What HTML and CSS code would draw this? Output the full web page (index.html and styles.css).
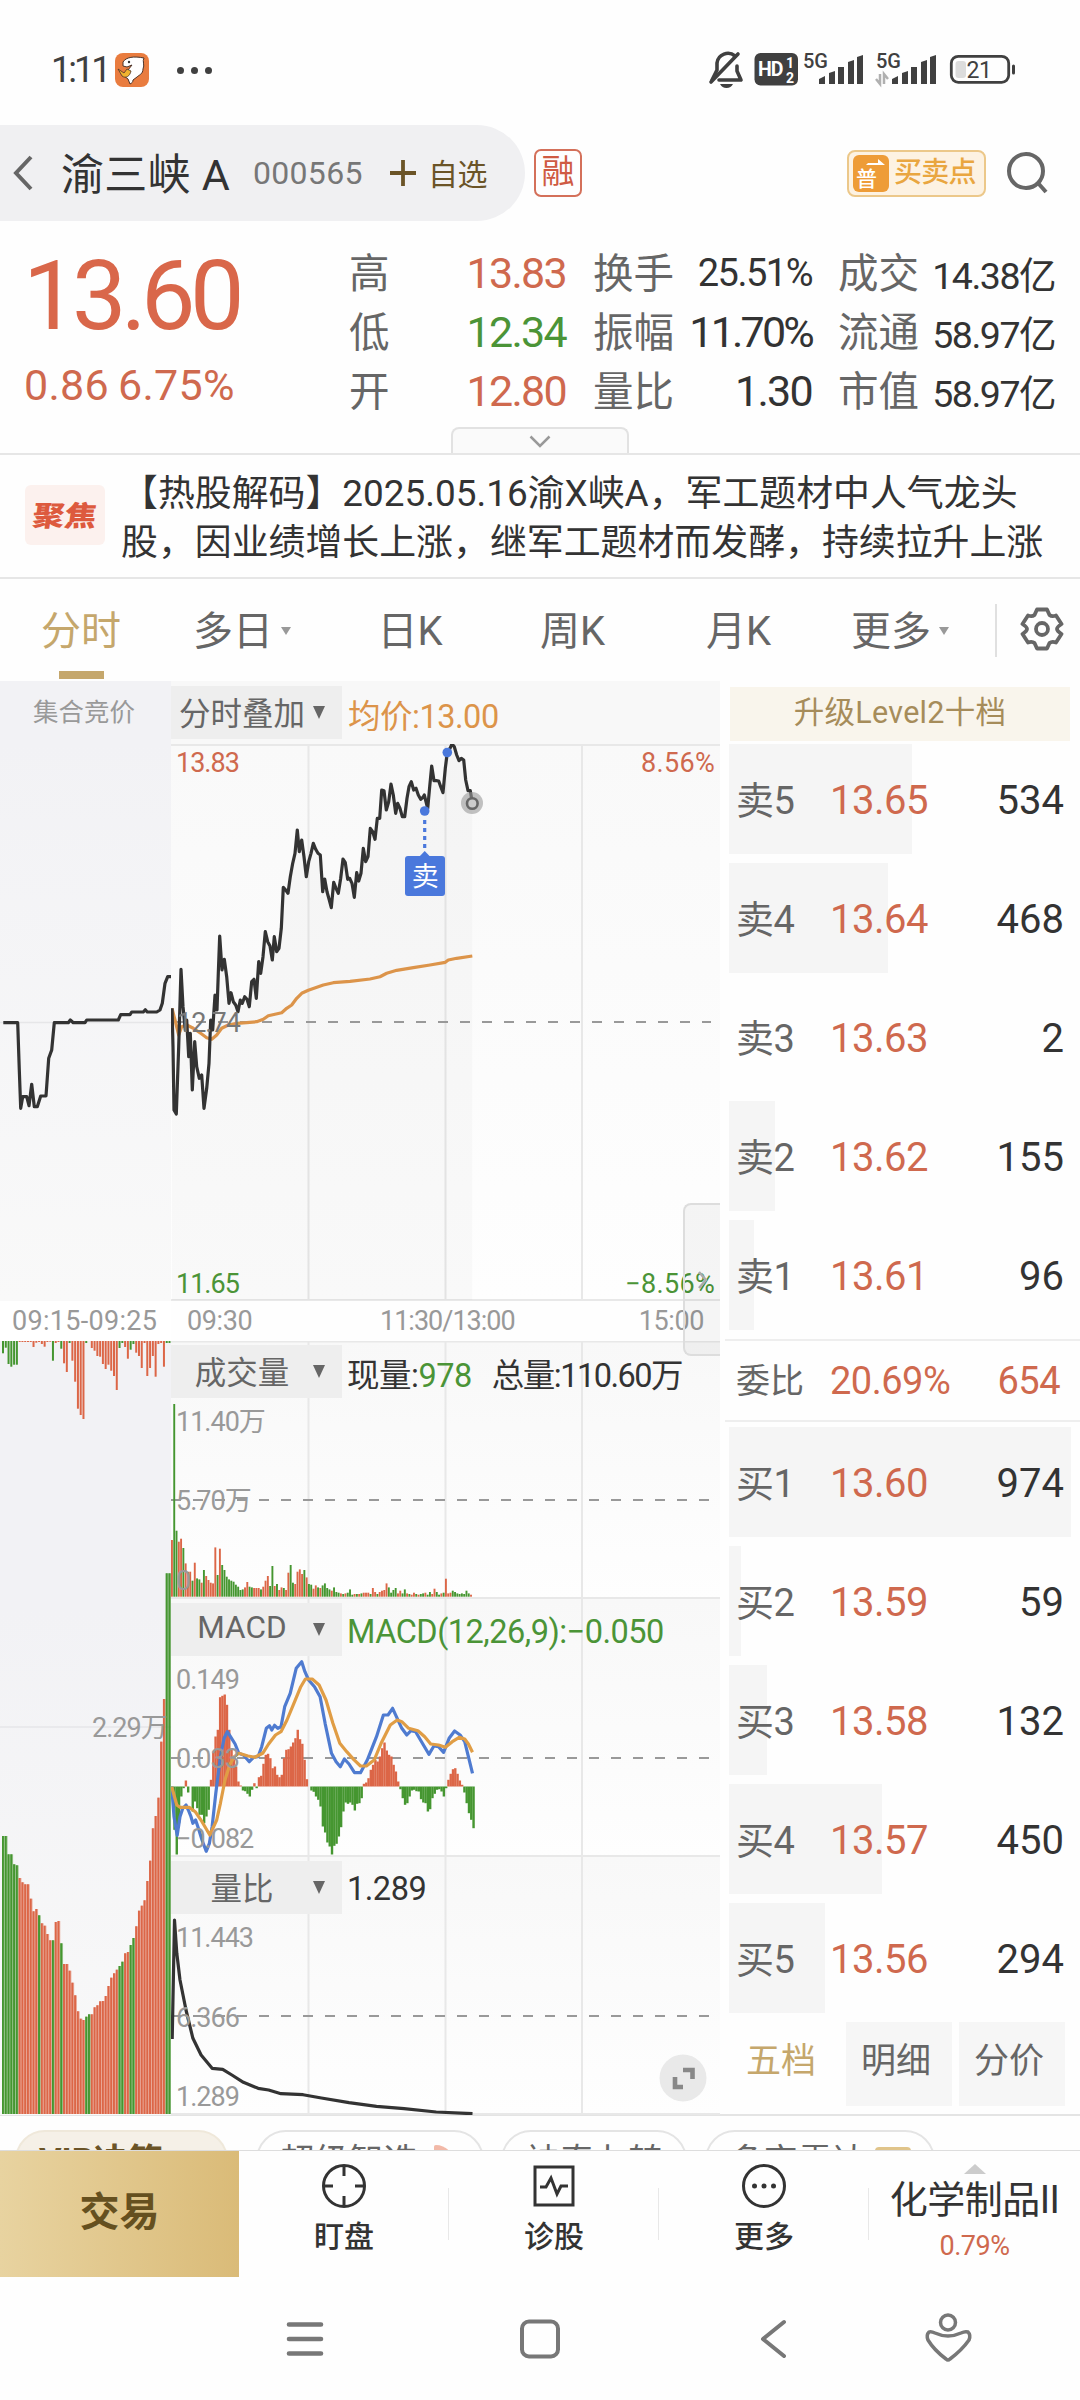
FILE: index.html
```
<!DOCTYPE html>
<html lang="zh-CN">
<head>
    <meta charset="UTF-8">
    <meta name="viewport" content="width=device-width, initial-scale=1.0">
    <title>渝三峡A 000565</title>
    <link rel="stylesheet" href="styles.css">
</head>
<body>
    <div class="status-bar">
        <span class="clock">1:11</span>
        <svg class="app-icon" width="34" height="34" viewBox="0 0 34 34">
            <rect width="34" height="34" rx="8" fill="#e97c3f"/>
            <path d="M8 9C11 4 19 3 29 5C27 8 30 12 28 16C28 21 24 22 22 24L18 27C18 29 17 30 15 31L13 26L9 23L13 17L17 12L12 14L8 13Z" fill="#fff" stroke="#4b3328" stroke-width="1"/>
            <path d="M3 16L9 20L12 16L16 18C15 23 11 26 7 23Z" fill="#f0b32f" stroke="#4b3328" stroke-width=".8"/>
            <circle cx="14" cy="9" r="1.200" fill="#333"/>
        </svg>
        <span class="dots"><i></i><i></i><i></i></span>
        <svg class="status-icons" width="310" height="40" viewBox="708 50 310 40">
            <g fill="none" stroke="#404040" stroke-width="3.600" stroke-linecap="round">
                <path d="M735 56A11 11 0 0 0 717 63V70L712 80"/>
                <path d="M737 66V71L741 80H719" stroke-linejoin="round"/>
                <path d="M711 82L738 54"/>
            </g>
            <path d="M720 84H733Q731 88 726.500 88Q722 88 720 84Z" fill="#404040"/>
            <rect x="754.500" y="53" width="43.500" height="32.500" rx="6" fill="#404040"/>
            <g class="hd-text">
                <text x="758" y="76" font-size="19.500">HD</text>
                <text x="786" y="67.500" font-size="14">1</text>
                <text x="786" y="82.500" font-size="14">2</text>
            </g>
            <g class="net-text">
                <text x="803" y="68" font-size="20">5G</text>
                <text x="876" y="68" font-size="20">5G</text>
            </g>
            <g fill="#404040">
                <path d="M819 84V79L825 76V84ZM829 84V73L835 71V84ZM838 84V67H844V84ZM848 84V62L854 60V84ZM857 84V57L863 55V84Z"/>
                <path d="M892 84V79L898 76V84ZM902 84V73L908 71V84ZM911 84V67H917V84ZM921 84V62L927 60V84ZM930 84V57L936 55V84Z"/>
                <rect x="1012" y="64.500" width="3" height="10" rx="1.500"/>
            </g>
            <path d="M880 74V84L876 79M884 84V74L888 79" fill="none" stroke="#b0b0b0" stroke-width="2.500"/>
            <rect x="951.300" y="56.300" width="57.400" height="26" rx="7" fill="none" stroke="#404040" stroke-width="2.800"/>
            <rect x="955.500" y="61" width="10.500" height="17" rx="3" fill="#dcdcdc"/>
            <text class="battery-text" x="979" y="78" text-anchor="middle">21</text>
        </svg>
    </div>

    <div class="header">
        <div class="stock-pill">
            <svg width="20" height="36" viewBox="0 0 20 36"><path d="M18 2L3 18L18 34" fill="none" stroke="#666" stroke-width="4"/></svg>
            <span class="stock-name">渝三峡 A</span>
            <span class="stock-code">000565</span>
            <svg width="26" height="26" viewBox="0 0 26 26"><path d="M13 0V26M0 13H26" stroke="#6b5427" stroke-width="3.800"/></svg>
            <span class="watch">自选</span>
        </div>
        <span class="margin-tag">融</span>
        <div class="trade-tag">
            <span class="trade-badge">普
                <svg width="20" height="8" viewBox="0 0 20 8"><path d="M0 6H19L12 0V4H2Z" fill="#fff"/></svg>
            </span>
            <span>买卖点</span>
        </div>
        <svg class="search" width="44" height="44" viewBox="0 0 44 44"><g fill="none" stroke="#666" stroke-width="4"><circle cx="20" cy="20" r="17"/><path d="M32 32L40 41"/></g></svg>
    </div>

    <div class="quote">
        <div class="quote-main">
            <div class="price red">13.60</div>
            <div class="change red">0.86 6.75%</div>
        </div>
        <dl class="col-a">
            <dt>高</dt><dd class="red">13.83</dd>
            <dt>低</dt><dd class="green">12.34</dd>
            <dt>开</dt><dd class="red">12.80</dd>
        </dl>
        <dl class="col-b">
            <dt>换手</dt><dd class="small">25.51%</dd>
            <dt>振幅</dt><dd class="tight">11.70%</dd>
            <dt>量比</dt><dd>1.30</dd>
        </dl>
        <dl class="col-c">
            <dt>成交</dt><dd class="small">14.38亿</dd>
            <dt>流通</dt><dd class="small">58.97亿</dd>
            <dt>市值</dt><dd class="small">58.97亿</dd>
        </dl>
        <div class="expand-tab"><svg width="22" height="13" viewBox="0 0 22 13"><path d="M1.500 1.500L11 11L20.500 1.500" fill="none" stroke="#999" stroke-width="2.500"/></svg></div>
    </div>

    <div class="news">
        <div class="news-tag"><span>聚焦</span></div>
        <p>【热股解码】2025.05.16渝X峡A，军工题材中人气龙头<br>股，因业绩增长上涨，继军工题材而发酵，持续拉升上涨</p>
    </div>

    <div class="tabs">
        <span class="tab active">分时</span>
        <span class="tab">多日<i class="caret"></i></span>
        <span class="tab">日K</span>
        <span class="tab">周K</span>
        <span class="tab">月K</span>
        <span class="tab">更多<i class="caret"></i></span>
        <div class="settings">
            <svg width="44" height="44" viewBox="0 0 44 44" fill="none" stroke="#666" stroke-width="3.800" stroke-linejoin="round">
                <path d="M17 2.500H27L29.500 8Q32 10 36 8.500L41.500 17Q37 20 37 22Q37 24 41.500 27L36 35.500Q32 34 29.500 36L27 41.500H17L14.500 36Q12 34 8 35.500L2.500 27Q7 24 7 22Q7 20 2.500 17L8 8.500Q12 10 14.500 8Z"/>
                <circle cx="22" cy="22" r="6"/>
            </svg>
        </div>
    </div>

    <div class="content">
        <div class="auction">
            <div class="auction-title">集合竞价</div>
            <svg class="auction-price" width="171" height="557" viewBox="0 744 171 557">
                <path d="M0 1022.500H171" stroke="#e6e6e8" stroke-width="1.500"/>
                <polyline id="auctionLine" class="line dark"/>
            </svg>
            <div class="auction-time">09:15-09:25</div>
            <svg class="auction-volume" width="171" height="774" viewBox="0 1341 171 774">
                <path d="M0 1727H171" stroke="#e6e6e8" stroke-width="1.500"/>
                <g id="auctionBars"></g>
                <text class="axis" x="92" y="1737">2.29万</text>
            </svg>
        </div>

        <div class="charts">
            <div class="chart-head">
                <div class="select"><span>分时叠加</span><i></i></div>
                <span class="avg">均价:13.00</span>
            </div>
            <svg class="price-chart" width="549" height="557" viewBox="171 744 549 557">
                <path class="grid" d="M171 745H720M308.500 744V1300M445.500 744V1300M582 744V1300M171 1300H720"/>
                <polygon id="priceArea" fill="#000" fill-opacity=".018"/>
                <path class="dash" d="M174 1022H711"/>
                <polyline id="avgLine" class="line" stroke="#dc944a"/>
                <polyline id="priceLine" class="line dark"/>
                <text class="axis up" x="176" y="772">13.83</text>
                <text class="axis up wide" x="715" y="772" text-anchor="end">8.56%</text>
                <text class="axis mid" x="177" y="1032">12.74</text>
                <text class="axis down" x="176" y="1293">11.65</text>
                <text class="axis down wide" x="715" y="1293" text-anchor="end">−8.56%</text>
                <circle cx="472" cy="803" r="11" fill="#999" fill-opacity=".6"/>
                <circle cx="472.300" cy="803.500" r="5.300" fill="#ccc" stroke="#666" stroke-width="2.600"/>
                <path d="M424.700 820V852" stroke="#4a78dc" stroke-width="3.200" stroke-dasharray="4 4"/>
                <path d="M419 857L424.700 851L430.500 857Z" fill="#4a78dc"/>
                <rect x="405" y="856" width="40" height="40" rx="3" fill="#4a78dc"/>
                <text class="sell" x="425" y="886" text-anchor="middle">卖</text>
                <circle cx="424.700" cy="811" r="4.800" fill="#4a78dc"/>
                <circle cx="447.300" cy="752.500" r="4.800" fill="#4a78dc"/>
            </svg>
            <div class="time-axis"><span>09:30</span><span>11:30/13:00</span><span>15:00</span></div>

            <div class="panel volume">
                <div class="panel-head">
                    <div class="select"><span>成交量</span><i></i></div>
                    <span>现量:<b class="green">978</b></span><span class="total">总量:110.60万</span>
                </div>
                <svg width="549" height="258" viewBox="171 1341 549 258">
                    <path class="grid" d="M171 1341.500H720M308.500 1341V1598M445.500 1341V1598M582 1341V1598M171 1598H720"/>
                    <path class="dash" d="M171 1500H711"/>
                    <g id="volumeBars"></g>
                    <text class="axis" x="176" y="1431">11.40万</text>
                    <text class="axis" x="176" y="1510">5.70万</text>
                    <text class="axis" x="176" y="1590">0</text>
                </svg>
            </div>
            <div class="panel macd">
                <div class="panel-head">
                    <div class="select"><span>MACD</span><i></i></div>
                    <span class="green">MACD(12,26,9):−0.050</span>
                </div>
                <svg width="549" height="258" viewBox="171 1599 549 258">
                    <path class="grid" d="M308.500 1599V1856M445.500 1599V1856M582 1599V1856M171 1856H720"/>
                    <path class="dash" d="M171 1758H711"/>
                    <g id="macdBars"></g>
                    <polyline id="difLine" class="line" stroke="#4f7bd0"/>
                    <polyline id="deaLine" class="line" stroke="#e09d45"/>
                    <text class="axis" x="176" y="1689">0.149</text>
                    <text class="axis" x="176" y="1768">0.033</text>
                    <text class="axis" x="176" y="1848">−0.082</text>
                </svg>
            </div>
            <div class="panel ratio">
                <div class="panel-head">
                    <div class="select"><span>量比</span><i></i></div>
                    <span>1.289</span>
                </div>
                <svg width="549" height="258" viewBox="171 1857 549 258">
                    <path class="grid" d="M308.500 1857V2114M445.500 1857V2114M582 1857V2114M171 2114H720"/>
                    <path class="dash" d="M171 2016H711"/>
                    <polyline id="ratioLine" class="line dark"/>
                    <text class="axis" x="176" y="1947">11.443</text>
                    <text class="axis" x="176" y="2027">6.366</text>
                    <text class="axis" x="176" y="2106">1.289</text>
                    <circle cx="683" cy="2078" r="23.500" fill="#e9e9e9"/>
                    <path d="M683 2070H692.500V2079M683 2087H675V2077" fill="none" stroke="#888" stroke-width="4.600"/>
                </svg>
            </div>
            <div class="drawer"><svg width="9" height="18" viewBox="0 0 9 18"><path d="M1 1L8 9L1 17" fill="none" stroke="#aaa" stroke-width="2.500"/></svg></div>
        </div>

        <div class="book">
            <div class="level2">升级Level2十档</div>
            <div class="rows">
                <div class="row"><i style="width:183px"></i><span>卖5</span><span class="red">13.65</span><b>534</b></div>
                <div class="row"><i style="width:159px"></i><span>卖4</span><span class="red">13.64</span><b>468</b></div>
                <div class="row"><i style="width:0"></i><span>卖3</span><span class="red">13.63</span><b>2</b></div>
                <div class="row"><i style="width:46px"></i><span>卖2</span><span class="red">13.62</span><b>155</b></div>
                <div class="row"><i style="width:25px"></i><span>卖1</span><span class="red">13.61</span><b>96</b></div>
            </div>
            <div class="ratio-row"><span>委比</span><span class="red">20.69%</span><b class="red">654</b></div>
            <div class="rows">
                <div class="row"><i style="width:342px"></i><span>买1</span><span class="red">13.60</span><b>974</b></div>
                <div class="row"><i style="width:12px"></i><span>买2</span><span class="red">13.59</span><b>59</b></div>
                <div class="row"><i style="width:38px"></i><span>买3</span><span class="red">13.58</span><b>132</b></div>
                <div class="row"><i style="width:153px"></i><span>买4</span><span class="red">13.57</span><b>450</b></div>
                <div class="row"><i style="width:96px"></i><span>买5</span><span class="red">13.56</span><b>294</b></div>
            </div>
            <div class="book-tabs"><span class="active">五档</span><span>明细</span><span>分价</span></div>
        </div>
    </div>

    <div class="chips">
        <span class="chip vip">VIP决策</span>
        <span class="chip super">超级智选<i class="flame"></i></span>
        <span class="chip nine">神奇九转</span>
        <span class="chip radar">多空雷达<i class="crown"></i></span>
    </div>

    <div class="toolbar">
        <div class="trade">交易</div>
        <div class="tool">
            <svg width="46" height="46" viewBox="0 0 46 46" fill="none" stroke="#333" stroke-width="3"><circle cx="23" cy="23" r="20.500"/><path d="M23 2V13M23 33V44M2 23H12M34 23H44"/></svg>
            <span>盯盘</span>
        </div>
        <div class="tool">
            <svg width="46" height="46" viewBox="0 0 46 46" fill="none" stroke="#333" stroke-width="3"><rect x="4" y="4" width="38" height="38"/><path d="M9 24H15L20 15L26 31L30 23H37"/></svg>
            <span>诊股</span>
        </div>
        <div class="tool">
            <svg width="46" height="46" viewBox="0 0 46 46" fill="none" stroke="#333" stroke-width="3"><circle cx="23" cy="23" r="20.500"/><g fill="#333" stroke="none"><circle cx="13.500" cy="23" r="2.500"/><circle cx="23" cy="23" r="2.500"/><circle cx="32.500" cy="23" r="2.500"/></g></svg>
            <span>更多</span>
        </div>
        <div class="sector"><i></i><span>化学制品II</span><b class="red">0.79%</b></div>
    </div>

    <div class="nav-bar">
        <svg width="1080" height="124" viewBox="0 2276 1080 124" fill="none" stroke="#777" stroke-width="4" stroke-linecap="round" stroke-linejoin="round">
            <path d="M289 2323.500H321M289 2338H321M289 2352.500H321" stroke-width="4.600"/>
            <rect x="522" y="2320.500" width="36" height="35" rx="7"/>
            <path d="M784 2321L763 2338L784 2355"/>
            <circle cx="948" cy="2321.500" r="7.500" stroke-width="3.500"/>
            <path d="M929 2331Q926 2334 928 2339Q934 2349 946 2358Q948 2360 950 2358Q962 2349 969 2339Q971 2334 968 2331Q965 2330 961 2332Q948 2338 935 2332Q931 2330 929 2331Z" stroke-width="3.500"/>
        </svg>
    </div>

    <script src="script.js"></script>
</body>
</html>
```
FILE: styles.css
```
* {
    box-sizing: border-box;
}
body {
    margin: 0;
    width: 1080px;
    height: 2400px;
    overflow: hidden;
    background: #fefefe;
    color: #333;
    font-family: Roboto, "Noto Sans CJK SC", sans-serif;
    letter-spacing: -0.03em;
}
svg {
    display: block;
    flex: none;
}
i {
    font-style: normal;
}
b {
    font-weight: 400;
}
.red {
    color: #cf694e;
}
.green {
    color: #4b9437;
}

/* status bar */
.status-bar {
    display: flex;
    align-items: center;
    height: 125px;
    padding: 15px 62px 0 51px;
}
.clock {
    width: 64px;
    font-size: 36px;
    color: #404040;
    letter-spacing: -3px;
}
.dots {
    display: flex;
    gap: 7px;
    margin-left: 28px;
}
.dots i {
    width: 7px;
    height: 7px;
    border-radius: 50%;
    background: #404040;
}
.status-icons {
    margin-left: auto;
}
.hd-text {
    font-weight: 700;
    fill: #fff;
    letter-spacing: -1px;
}
.net-text {
    font-weight: 500;
    fill: #404040;
    letter-spacing: 0;
}
.battery-text {
    font-size: 23px;
    fill: #404040;
}

/* header */
.header {
    display: flex;
    align-items: center;
    height: 96px;
}
.stock-pill {
    display: flex;
    align-items: center;
    width: 525px;
    height: 96px;
    padding-left: 13px;
    background: #f0f0f2;
    border-radius: 0 48px 48px 0;
}
.stock-name {
    width: 191px;
    margin: -4px 0 0 28px;
    font-size: 43px;
    letter-spacing: .3px;
    white-space: nowrap;
}
.stock-code {
    width: 138px;
    padding-left: 1px;
    font-size: 32px;
    color: #777;
    letter-spacing: .3px;
}
.watch {
    margin: -3px 0 0 12px;
    font-size: 30px;
    color: #6b5427;
    letter-spacing: -.5px;
}
.margin-tag {
    width: 48px;
    height: 48px;
    margin-left: 9px;
    border: 2px solid #d4705a;
    border-radius: 7px;
    color: #cf5b43;
    font-size: 33px;
    line-height: 42px;
    text-align: center;
    letter-spacing: 0;
}
.trade-tag {
    display: flex;
    align-items: center;
    width: 139px;
    height: 47px;
    margin-left: 265px;
    padding-left: 4px;
    border: 2px solid #ecc88a;
    border-radius: 8px;
    background: #fdf2e2;
    color: #e9a640;
    font-size: 28px;
    font-weight: 500;
    letter-spacing: -.8px;
    line-height: 40px;
}
.trade-badge {
    position: relative;
    width: 36px;
    height: 37px;
    margin-right: 5px;
    padding: 13px 0 0 3px;
    border-radius: 6px;
    background: #ee9c37;
    color: #fff;
    font-size: 21px;
    line-height: 22px;
}
.trade-badge svg {
    position: absolute;
    top: 4px;
    left: 13px;
}
.search {
    margin-left: 20px;
}

/* quote */
.quote {
    position: relative;
    display: flex;
    height: 234px;
    border-bottom: 2px solid #e6e6e6;
}
.quote-main {
    width: 349px;
    padding-left: 23px;
}
.price {
    margin-top: 18px;
    font-size: 97px;
    line-height: 114px;
    color: #d9674a;
    letter-spacing: -5.500px;
}
.change {
    padding-left: 1px;
    font-size: 43px;
    line-height: 64px;
    letter-spacing: .3px;
    word-spacing: -2px;
}
.quote dl {
    display: grid;
    grid-template-columns: auto 1fr;
    grid-auto-rows: 59px;
    align-items: center;
    align-content: start;
    margin: 22px 0 0;
}
.quote dt {
    margin-top: -4px;
    color: #666;
    font-size: 40.500px;
    letter-spacing: 0;
}
.quote dd {
    margin: 0;
    font-size: 43px;
    text-align: right;
    white-space: nowrap;
    letter-spacing: -1.700px;
}
.quote dd.small {
    font-size: 38px;
    letter-spacing: -1.500px;
}
.quote dd.tight {
    letter-spacing: -2.800px;
}
.quote .col-c dd {
    margin-top: -1px;
    font-size: 37.500px;
}
.quote .col-a {
    width: 217px;
    margin-right: 27px;
}
.quote .col-b {
    width: 219px;
    margin-right: 26px;
}
.quote .col-c {
    width: 217px;
}
.expand-tab {
    position: absolute;
    left: 451px;
    bottom: 0;
    display: flex;
    justify-content: center;
    width: 178px;
    height: 26px;
    padding-top: 6px;
    border: 2px solid #e2e2e2;
    border-bottom: 0;
    border-radius: 8px 8px 0 0;
    background: #fafafa;
}

/* news */
.news {
    display: flex;
    align-items: center;
    height: 124px;
    padding-left: 25px;
    border-bottom: 2px solid #e6e6e6;
}
.news-tag {
    display: flex;
    align-items: center;
    justify-content: center;
    width: 80px;
    height: 60px;
    margin-top: -2px;
    border-radius: 6px;
    background: #fcf1ee;
}
.news-tag span {
    margin-top: -3px;
    color: #dd5a3e;
    font-size: 32px;
    font-weight: 900;
    letter-spacing: 0;
    transform: skewX(-8deg) scaleY(.88);
}
.news p {
    margin: 3px 0 0 16px;
    font-size: 36.900px;
    line-height: 49px;
    letter-spacing: 0;
    white-space: nowrap;
}

/* tabs */
.tabs {
    display: grid;
    grid-template-columns: 164px 155px 185px 140px 192px 159px 85px;
    align-items: center;
    height: 102px;
    color: #666;
    font-size: 40px;
    letter-spacing: 0;
}
.tab {
    position: relative;
    display: flex;
    align-items: center;
    justify-content: center;
    height: 100px;
    padding: 0 3px 4px 0;
}
.tab.active {
    justify-content: flex-start;
    padding-left: 41px;
    color: #c5a76c;
}
.tab.active::after {
    content: "";
    position: absolute;
    left: 59px;
    bottom: 1px;
    width: 45px;
    height: 8px;
    background: #c5a76c;
}
.tab:nth-child(2) {
    justify-content: flex-start;
    padding-left: 29px;
}
.tab:nth-child(6) {
    justify-content: flex-start;
    padding-left: 15px;
}
.caret {
    margin: 6px 0 0 8px;
    border: 5px solid transparent;
    border-top: 8px solid #999;
    border-bottom: 0;
}
.settings {
    display: flex;
    align-items: center;
    height: 53px;
    padding: 0 0 3px 23px;
    border-left: 2px solid #e0e0e0;
}

/* charts */
.content {
    display: flex;
    height: 1435px;
    border-bottom: 2px solid #e4e4e4;
}
.auction {
    width: 171px;
    background: #f2f2f5;
}
.auction-title {
    height: 63px;
    padding: 12px 0 0 33px;
    font-size: 25.500px;
    line-height: 38px;
    color: #999;
    letter-spacing: 0;
}
.auction-price {
    background: linear-gradient(#f2f2f5, #f9f9f9);
}
.auction-time {
    height: 40px;
    padding-left: 12px;
    background: #fff;
    color: #999;
    font-size: 27px;
    line-height: 41px;
    letter-spacing: .3px;
}
.auction-volume {
    background: linear-gradient(#f2f2f5 35%, #f9f9f9);
}
.charts {
    position: relative;
    width: 549px;
}
.chart-head {
    display: flex;
    align-items: center;
    height: 63px;
    background: #f8f8f8;
}
.select {
    display: flex;
    align-items: center;
    width: 171px;
    height: 53px;
    background: #eee;
    color: #666;
    font-size: 31.500px;
}
.select span {
    width: 142px;
    margin-top: -4px;
    text-align: center;
    letter-spacing: 0;
}
.select i {
    border: 6.500px solid transparent;
    border-top: 13px solid #666;
    border-bottom: 0;
}
.avg {
    margin: 1px 0 0 6px;
    color: #dc944a;
    font-size: 32.500px;
}
.price-chart {
    background: linear-gradient(#f9f9f9, #fefefe);
}
.grid {
    stroke: #e8e8e8;
    stroke-width: 2;
    fill: none;
}
.dash {
    stroke: #999;
    stroke-width: 2;
    stroke-dasharray: 10 12;
}
.line {
    fill: none;
    stroke-width: 3.200;
    stroke-linejoin: round;
}
.line.dark {
    stroke: #333;
}
.axis {
    font-size: 27px;
    fill: #999;
    letter-spacing: -1px;
}
.axis.up {
    fill: #cf694e;
}
.axis.down {
    fill: #4b9437;
}
.axis.mid {
    fill: #777;
}
.axis.wide {
    letter-spacing: .3px;
}
.sell {
    font-size: 27px;
    fill: #fff;
}
.time-axis {
    display: grid;
    grid-template-columns: 170px 210px 1fr;
    height: 40px;
    padding: 0 16px;
    color: #999;
    font-size: 27px;
    line-height: 41px;
    letter-spacing: -.4px;
}
.time-axis span:nth-child(2) {
    padding-left: 23px;
    letter-spacing: -1px;
}
.time-axis span:last-child {
    text-align: right;
}
.panel {
    position: relative;
    height: 258px;
    background: linear-gradient(#f8f8f8, #fefefe);
}
.panel-head {
    position: absolute;
    top: 4px;
    left: 0;
    display: flex;
    align-items: center;
    font-size: 32.500px;
}
.panel-head > span {
    margin: 2px 0 0 5px;
    white-space: nowrap;
}
.panel-head > .total {
    margin-left: 20px;
    letter-spacing: -1.500px;
}
.macd .panel-head > span {
    margin-top: 4px;
    letter-spacing: -.5px;
}
.drawer {
    position: absolute;
    top: 522px;
    right: 0;
    display: flex;
    align-items: center;
    justify-content: center;
    width: 37px;
    height: 153px;
    border: 2px solid #ddd;
    border-right: 0;
    border-radius: 8px 0 0 8px;
    background: rgba(0, 0, 0, .035);
}

/* order book */
.book {
    width: 360px;
    padding: 6px 0 0 9px;
}
.level2 {
    width: 340px;
    height: 54px;
    margin-left: 1px;
    background: #f9f5ec;
    color: #a68c5a;
    font-size: 30.500px;
    line-height: 51px;
    text-align: center;
    letter-spacing: .3px;
}
.rows {
    display: flex;
    flex-direction: column;
    gap: 9px;
    padding-top: 3px;
}
.row {
    position: relative;
    display: grid;
    grid-template-columns: 94px 1fr auto;
    align-items: center;
    height: 110px;
    padding: 2px 16px 0 7px;
    color: #333;
    font-size: 40px;
}
.row > * {
    position: relative;
}
.row > i {
    position: absolute;
    top: 0;
    left: 0;
    height: 110px;
    background: #f5f5f5;
}
.row b {
    letter-spacing: 0;
}
.row span:nth-child(2) {
    margin-top: -5px;
    color: #666;
    font-size: 38px;
}
.ratio-row {
    display: grid;
    grid-template-columns: 94px 1fr auto;
    align-items: center;
    height: 83px;
    margin: 9px 0 2px -4px;
    padding: 0 20px 0 11px;
    border: 2px solid #eee;
    border-width: 2px 0;
    font-size: 38px;
    letter-spacing: -.5px;
}
.ratio-row span:first-child {
    margin-top: -4px;
    color: #666;
    font-size: 34px;
    letter-spacing: 0;
}
.book-tabs {
    display: grid;
    grid-template-columns: 110px 106px 106px;
    gap: 7px;
    margin-top: 9px;
    font-size: 35px;
    line-height: 80px;
    color: #666;
    letter-spacing: 0;
    text-align: center;
}
.book-tabs span {
    height: 84px;
    padding-right: 6px;
    background: #f6f6f6;
}
.book-tabs .active {
    background: none;
    color: #c5a76c;
}

/* feature chips, cut by the toolbar */
.chips {
    display: flex;
    height: 34px;
    padding: 14px 0 0 15px;
    overflow: hidden;
}
.chip {
    flex: none;
    height: 60px;
    border: 2px solid #e4e4e4;
    border-radius: 30px;
    color: #666;
    font-size: 34.500px;
    line-height: 58px;
    letter-spacing: 0;
    padding-left: 22px;
}
.chip.vip {
    width: 213px;
    margin-right: 28px;
    border-color: #efe8da;
    background: #f5f0e7;
    color: #6b5427;
    font-weight: 700;
}
.chip.super {
    width: 228px;
    margin-right: 17px;
}
.chip.nine {
    width: 186px;
    margin-right: 18px;
}
.chip.radar {
    width: 230px;
}
.flame, .crown {
    display: inline-block;
    width: 20px;
    height: 30px;
    margin-left: 16px;
    border-radius: 2px 20px 8px 8px;
    background: #f2b9a8;
    vertical-align: -2px;
}
.crown {
    width: 36px;
    height: 24px;
    margin-left: 8px;
    border-radius: 4px;
    background: #e0c48a;
    vertical-align: 2px;
}

/* toolbar */
.toolbar {
    display: flex;
    height: 127px;
    border-top: 1px solid #ddd;
}
.trade {
    width: 239px;
    background: linear-gradient(90deg, #e8d3a0, #dabb78);
    color: #65501f;
    font-size: 40px;
    font-weight: 700;
    line-height: 124px;
    text-align: center;
    letter-spacing: 0;
}
.tool {
    display: flex;
    flex-direction: column;
    align-items: center;
    gap: 6px;
    width: 210px;
    padding-top: 12px;
    font-size: 30px;
    font-weight: 500;
    line-height: 44px;
    letter-spacing: 0;
    background: linear-gradient(#e8e8e8, #e8e8e8) right 37px / 1px 52px no-repeat;
}
.sector {
    display: flex;
    flex-direction: column;
    align-items: center;
    flex: 1;
    padding-top: 13px;
    font-size: 38px;
    line-height: 50px;
    letter-spacing: -.5px;
}
.sector i {
    border: 11px solid transparent;
    border-top: 0;
    border-bottom: 10px solid #ccc;
}
.sector span {
    margin-top: 1px;
}
.sector b {
    font-size: 27px;
    line-height: 42px;
    letter-spacing: -.5px;
}
.nav-bar {
    height: 124px;
}
```
FILE: script.js
```
const RED = '#dc6647';
const GREEN = '#459630';
const NS = 'http://www.w3.org/2000/svg';

// [x, y] pairs -> page pixels
function scale(raw, kx, ky, y0) {
    return raw.trim().split(/\s+/).map(p => {
        const [x, y] = p.split(',').map(Number);
        return (x * kx).toFixed(1) + ',' + (y0 + y * ky).toFixed(1);
    }).join(' ');
}

function draw(id, points) {
    document.getElementById(id).setAttribute('points', points);
}

function bar(group, x, y, w, h, color, opacity) {
    const r = document.createElementNS(NS, 'rect');
    r.setAttribute('x', x.toFixed(2));
    r.setAttribute('y', y.toFixed(1));
    r.setAttribute('width', w);
    r.setAttribute('height', Math.max(h, 0.5).toFixed(1));
    r.setAttribute('fill', color);
    if (opacity) r.setAttribute('fill-opacity', opacity);
    group.appendChild(r);
}

const KX = 720 / 1568;
const KY = 1 / 3;

// price lines
draw('auctionLine', scale(`10,1028 53,1028 58,1170 62,1285 68,1250 80,1250 87,1277 95,1213 103,1280 112,1280 122,1248 138,1248
    146,1135 155,1110 163,1028 205,1028 211,1020 220,1028 255,1028 260,1020 355,1020 362,1004 390,1004 395,996 430,996
    436,989 442,996 470,996 480,990 487,970 495,910 503,890 518,890`, KY, KY, 680));

const price = scale(`516,985 519,1100 522,1290 529,1302 536,1100 543,868 549,980 556,1050 560,1020 566,1130 571,1060 577,1230
    584,1085 590,1160 598,1195 605,1185 612,1285 620,1225 627,1150 632,1020 638,1050 645,945 651,990 655,880 659,768
    666,870 673,838 680,890 687,970 693,938 700,965 707,975 714,995 721,960 727,970 734,950 741,958 748,980 755,905
    762,898 769,955 776,845 782,880 789,830 796,755 803,785 810,798 817,840 823,770 830,815 837,805 844,745 850,622
    857,630 864,640 871,590 878,550 885,520 892,450 898,515 905,480 912,530 919,590 926,545 933,520 940,490 947,508
    954,520 961,525 968,635 974,597 981,635 988,660 994,683 1001,607 1008,625 1015,640 1022,595 1029,537 1036,548
    1043,598 1049,595 1056,610 1063,652 1070,578 1076,603 1083,580 1090,505 1097,545 1104,530 1111,445 1118,455
    1125,478 1132,415 1139,415 1145,330 1152,332 1159,390 1166,365 1173,312 1180,345 1187,400 1193,370 1200,385
    1207,410 1214,410 1221,355 1227,320 1234,305 1241,330 1248,325 1255,345 1262,358 1269,352 1273,345 1283,385
    1289,320 1295,258 1302,302 1309,302 1316,303 1322,320 1329,338 1336,265 1342,218 1350,205 1356,192 1363,200
    1370,225 1377,242 1384,235 1391,240 1397,300 1404,332 1411,332 1417,368`, KY, KY, 680);
draw('priceLine', price);
draw('priceArea', price + ' 472.3,1300 172,1300');

draw('avgLine', scale(`516,985 525,1020 536,1065 545,1040 560,1035 580,1045 605,1062 620,1073 635,1078 650,1065 665,1045
    685,1035 710,1030 740,1028 770,1025 790,1018 805,1007 845,998 860,985 875,975 890,955 905,940 925,931 970,915
    1000,908 1050,904 1110,897 1140,890 1160,880 1190,871 1240,863 1290,855 1336,847 1345,840 1370,835 1417,828`, KY, KY, 680));

// call auction: unmatched volume from the top, matched volume from the bottom
const matched = `48g 48g 103g 103g 133g 136g 174 187 193 193 236 274 267 286g 310 317 342 361 361g 306 303 370g 432 432 452
    488 526 574 596 600 590g 583g 583 562 556 544 543 528 498 473 460 449 438g 425g 400 396 375g 354g 319 272 257 241
    183 122 25 -12 -67 -235 -363 -740g -740g`.split(/\s+/);
const unmatched = `37g 20g 69g 77g 71g 71g 3 3 3 3 3 18 5 3 9 17 3 2 59g 6 3 23g 67 93 6g 59 122 203 222 234 6g 0 21 29 45
    47 69 84 71 89 105 147 21g 6g 18 53 26g 9g 35 45 81 6 105 81 45 107 9 6 77 6g 6g`.split(/\s+/);
const auction = document.getElementById('auctionBars');
matched.forEach((v, i) => {
    const color = v.endsWith('g') ? GREEN : RED;
    const y = 1820 + parseInt(v) * KY;
    const x = 2 + i * 2.775;
    bar(auction, x, y, 2.775, 2114 - y, color, .5);
    bar(auction, x, y, 1.9, 2114 - y, color);
});
unmatched.forEach((v, i) => {
    const h = parseInt(v) * KY;
    if (h) bar(auction, 2 + i * 2.775, 1341, 2, h, v.endsWith('g') ? GREEN : RED);
});

// volume
const volume = `170 578g 198g 165 174 146g 100 75 75 48g 102 55g 52g 42 80g 62 50 42 40 148 65g 144 95g 80g 60g 52g 48g 45g
    36g 30g 20g 22g 28 44 30g 28g 26 26 26 22g 30 48 62 32g 92g 32 38g 20 28 26g 20 72 95g 42g 38 75 82 68 80g 58 38g 36g
    24 34 28g 26 34g 40g 26g 22g 18 28g 14g 12g 10 8g 10 12g 22g 6g 8 8g 8 10g 12 12 12 8g 26 14 8g 14 18 20 40 28g 12g
    20g 26g 10 18 10g 22g 10 8g 6 12 8g 6 8g 10g 12 6g 14g 8 24 14g 6g 10 12g 54 10 12 18g 14g 10g 8g 10g 8g 18g 10g 6`.split(/\s+/);
const volumeBars = document.getElementById('volumeBars');
volume.forEach((v, i) => {
    const h = parseInt(v) * KY;
    bar(volumeBars, 171 + i * 2.283, 1596.7 - h, 1.9, h, v.endsWith('g') ? GREEN : RED);
});

// MACD
const macd = [-25, -130, -204, -110, -30, -5, 18, -18, 0, -75, -45, -65, -85, -85, -110, -90, -70, 20, 105, 150, 170, 268,
    272, 276, 245, 170, 115, 85, 60, 15, 3, -12, -14, -22, -30, -10, 10, -5, 28, 32, 68, 95, 98, 85, 55, 60, 35, 28, 35,
    85, 110, 112, 120, 132, 145, 170, 142, 128, 80, 22, 0, -12, -16, -30, -40, -60, -120, -138, -168, -180, -204, -178,
    -172, -150, -122, -75, -48, -52, -48, -55, -72, -52, -50, -35, 8, 12, 25, 50, 65, 80, 75, 90, 115, 132, 108, 95, 90,
    65, 45, 15, -8, -35, -55, -50, -30, -12, -10, -14, -15, -38, -48, -50, -75, -68, -35, -22, -10, -8, -15, -30, -5, 20,
    38, 52, 55, 38, 18, 5, -18, -50, -80, -100, -125];
const macdBars = document.getElementById('macdBars');
macd.forEach((v, i) => {
    const h = Math.abs(v) * KY;
    if (v) bar(macdBars, 171 + i * 2.283, v > 0 ? 1786.5 - h : 1786.5, 2.4, h, v > 0 ? RED : GREEN);
});
draw('difLine', scale(`374,680 379,770 386,826 392,770 398,745 405,735 410,750 416,770 420,790 426,780 432,805 440,840
    449,874 456,850 462,800 470,700 480,590 488,535 495,515 502,530 512,552 520,580 530,585 543,605 552,592 562,590
    570,560 580,505 587,497 592,510 598,496 605,505 612,500 620,440 632,400 645,325 657,305 664,335 672,360 685,380
    697,410 708,490 722,580 732,605 741,620 750,597 760,612 772,638 785,638 800,600 810,565 820,530 835,465 845,465
    855,445 865,475 875,505 886,525 895,512 905,515 920,550 934,583 945,558 955,560 966,577 978,535 990,513 1002,525
    1012,545 1020,590 1029,640`, KX, KY, 1560));
draw('deaLine', scale(`374,680 385,735 392,742 412,742 425,755 440,785 457,825 472,780 480,730 490,660 500,615 510,590
    520,580 540,588 555,592 572,580 585,552 600,525 612,515 625,480 640,430 655,380 665,357 680,357 695,375 710,420
    725,490 740,550 755,575 770,598 785,618 798,618 815,600 830,550 850,495 865,480 875,485 890,505 910,512 925,530
    938,552 955,555 970,562 985,545 1000,532 1012,537 1020,552 1029,577`, KX, KY, 1560));

// volume ratio
draw('ratioLine', scale(`375,657 380,300 385,400 392,480 405,570 420,655 438,705 462,745 485,748 505,765 530,787 562,805
    585,810 612,821 660,824 700,834 760,848 820,859 880,866 950,876 1029,881`, KX, KY, 1820));
```
